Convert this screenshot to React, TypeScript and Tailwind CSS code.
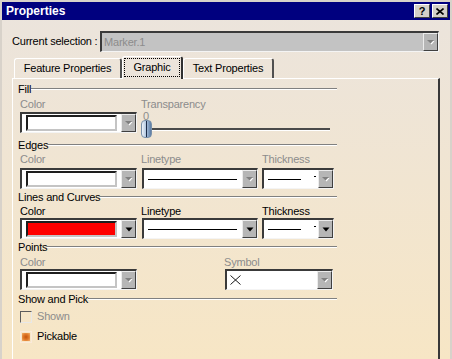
import React from "react";

const OFF = "text-[#8c8c8c]";

function Arrow({ off }: { off?: boolean }) {
  return off ? (
    <svg width="9" height="6" viewBox="0 0 9 6">
      <path d="M2.5 2h6l-3 3.5z" fill="#ffffff" />
      <path d="M1 1h7l-3.5 3.5z" fill="#808080" />
    </svg>
  ) : (
    <svg width="8" height="5" viewBox="0 0 8 5">
      <path d="M0.5 0.5h7L4 4.5z" fill="#000000" />
    </svg>
  );
}

function DropBtn({ off }: { off?: boolean }) {
  return (
    <div className="w-[15px] self-stretch flex items-center justify-center bg-[#b6b6b6] border-t border-l border-t-[#ececec] border-l-[#ececec] border-r border-b border-r-[#404040] border-b-[#404040]">
      <Arrow off={off} />
    </div>
  );
}

function Combo({
  className = "",
  children,
  off,
  bg = "bg-white",
}: {
  className?: string;
  children?: React.ReactNode;
  off?: boolean;
  bg?: string;
}) {
  return (
    <div
      className={`flex h-[21px] border-t-2 border-l-2 border-t-[#3a3a3a] border-l-[#3a3a3a] border-r border-b border-r-[#f4f4f4] border-b-[#f4f4f4] ${bg} ${className}`}
    >
      <div className="flex-1 flex items-center min-w-0">{children}</div>
      <DropBtn off={off} />
    </div>
  );
}

function Swatch({ color = "bg-white" }: { color?: string }) {
  return (
    <div
      className={`ml-[4px] h-[16px] w-[91px] border-t-2 border-l-2 border-t-[#1e1e1e] border-l-[#1e1e1e] border-r-2 border-b-2 border-r-[#c4c4c4] border-b-[#c4c4c4] ${color}`}
    />
  );
}

function Label({ children, off }: { children: React.ReactNode; off?: boolean }) {
  return <div className={`h-[12px] leading-[12px] whitespace-nowrap ${off ? OFF : "text-black"}`}>{children}</div>;
}

function Header({ title, className = "" }: { title: string; className?: string }) {
  return (
    <div className={`flex items-center h-[12px] w-[319px] ${className}`}>
      <span className="leading-[12px] whitespace-nowrap">{title}</span>
      <div className="flex-1 h-[2px] border-t border-t-[#808080] border-b border-b-white" />
    </div>
  );
}

function LineCombo({ w, off }: { w: string; off?: boolean }) {
  return (
    <Combo className={w} off={off}>
      <div className="ml-[4px] h-px w-[89px] bg-black" />
    </Combo>
  );
}

function ThickCombo({ off }: { off?: boolean }) {
  return (
    <Combo className="w-[72px]" off={off}>
      <div className="ml-[4px] h-px w-[33px] bg-black" />
      <div className="ml-[13px] mb-[6px] h-px w-[2px] bg-black" />
    </Combo>
  );
}

function TabBtn({
  label,
  w,
  selected,
}: {
  label: string;
  w: string;
  selected?: boolean;
}) {
  if (selected) {
    return (
      <div
        className={`${w} h-[23px] relative z-10 -mb-px bg-[#ece4db] rounded-t-[3px] border-t border-l border-t-white border-l-white border-r-2 border-r-[#303030] p-[1px] pb-[2px]`}
      >
        <div className="h-full border border-dotted border-black flex items-center justify-center">{label}</div>
      </div>
    );
  }
  return (
    <div
      className={`${w} h-[20px] mt-[2px] rounded-t-[3px] border-t border-l border-t-white border-l-white border-r-2 border-r-[#505050] flex items-center justify-center`}
    >
      {label}
    </div>
  );
}

export default function App() {
  return (
    <div className="w-[452px] h-[359px] overflow-hidden bg-[#d8d2ca] pt-[2px] pl-[2px] pr-[2px] font-['Liberation_Sans',Arial,sans-serif] text-[11px] tracking-[-0.2px] text-black">
      <div className="h-full bg-linear-to-b from-[#ebe4dd] to-[#f7e6c5]">
        {/* title bar */}
        <div className="h-[18px] bg-[#00007f] flex items-center pl-[4px] pr-[2px]">
          <span className="text-white font-bold text-[12px] tracking-normal">Properties</span>
          <div className="ml-auto flex gap-[2px]">
            <div className="w-[16px] h-[14px] bg-[#d4d0c8] border-t border-l border-t-white border-l-white border-r border-b border-r-[#404040] border-b-[#404040] flex items-center justify-center font-bold text-[11px] leading-none">
              ?
            </div>
            <div className="w-[16px] h-[14px] bg-[#d4d0c8] border-t border-l border-t-white border-l-white border-r border-b border-r-[#404040] border-b-[#404040] flex items-center justify-center">
              <svg width="8" height="7" viewBox="0 0 8 7">
                <path d="M0.5 0.5l7 6M7.5 0.5l-7 6" stroke="#000" strokeWidth="1.6" />
              </svg>
            </div>
          </div>
        </div>

        {/* current selection */}
        <div className="flex items-center pl-[10px] mt-[11px]">
          <span className="w-[88px] whitespace-nowrap">Current selection :</span>
          <Combo className="w-[339px] h-[20px]" bg="bg-[#c3c3c3]" off>
            <span className={`ml-[2px] ${OFF}`}>Marker.1</span>
          </Combo>
        </div>

        {/* tabs */}
        <div className="flex items-end pl-[12px] mt-[4px]">
          <TabBtn label="Feature Properties" w="w-[108px]" />
          <TabBtn label="Graphic" w="w-[61px]" selected />
          <TabBtn label="Text Properties" w="w-[91px]" />
        </div>

        {/* tab panel */}
        <div className="ml-[10px] w-[428px] h-[300px] border-t border-l border-t-white border-l-white border-r-2 border-r-[#383838] pl-[5px] pt-[4px]">
          <Header title="Fill" />
          <div className="flex ml-[2px] mt-[3px] h-[40px]">
            <div className="w-[117px]">
              <Label off>Color</Label>
              <Combo className="w-[117px] mt-[2px]" off>
                <Swatch />
              </Combo>
            </div>
            <div className="ml-[4px] w-[190px]">
              <Label off>Transparency</Label>
              <div className="relative h-[28px]">
                <span className={`absolute left-[2px] top-[1px] leading-[11px] ${OFF}`}>0</span>
                <div className="absolute left-[11px] top-[18px] w-[178px] h-[3px] border-t-2 border-t-[#4a4a4a] border-b border-b-white" />
                <div className="absolute left-0 top-[10px] w-[11px] h-[18px] rounded-[4px] border border-[#7890aa] bg-linear-to-r from-[#eef3f9] via-[#a8c0dc] to-[#5c7ca4] flex justify-center">
                  <div className="w-px h-full bg-[#1c2c48]" />
                </div>
              </div>
            </div>
          </div>

          <Header title="Edges" className="mt-[1px]" />
          <div className="flex ml-[2px] mt-[2px]">
            <div className="w-[117px]">
              <Label off>Color</Label>
              <Combo className="w-[117px] mt-[3px]" off>
                <Swatch />
              </Combo>
            </div>
            <div className="ml-[5px] w-[116px]">
              <div className="-ml-px">
                <Label off>Linetype</Label>
              </div>
              <div className="mt-[3px]">
                <LineCombo w="w-[116px]" off />
              </div>
            </div>
            <div className="ml-[4px] w-[72px]">
              <Label off>Thickness</Label>
              <div className="mt-[3px]">
                <ThickCombo off />
              </div>
            </div>
          </div>

          <Header title="Lines and Curves" className="mt-[2px]" />
          <div className="flex ml-[2px] mt-[2px]">
            <div className="w-[117px]">
              <Label>Color</Label>
              <Combo className="w-[117px] mt-[1px]">
                <Swatch color="bg-[#ff0000]" />
              </Combo>
            </div>
            <div className="ml-[5px] w-[116px]">
              <div className="-ml-px">
                <Label>Linetype</Label>
              </div>
              <div className="mt-[1px]">
                <LineCombo w="w-[116px]" />
              </div>
            </div>
            <div className="ml-[4px] w-[72px]">
              <Label>Thickness</Label>
              <div className="mt-[1px]">
                <ThickCombo />
              </div>
            </div>
          </div>

          <Header title="Points" className="mt-[2px]" />
          <div className="flex ml-[2px] mt-[3px]">
            <div className="w-[117px]">
              <Label off>Color</Label>
              <Combo className="w-[117px] mt-[1px]" off>
                <Swatch />
              </Combo>
            </div>
            <div className="ml-[88px] w-[108px]">
              <div className="-ml-px">
                <Label off>Symbol</Label>
              </div>
              <Combo className="w-[108px] mt-[1px]" off>
                <svg className="ml-[3px]" width="11" height="10" viewBox="0 0 11 10">
                  <path d="M0.5 0.5l10 9M10.5 0.5l-10 9" stroke="#000" strokeWidth="0.9" />
                </svg>
              </Combo>
            </div>
          </div>

          <Header title="Show and Pick" className="mt-[3px]" />
          <div className="flex items-center ml-[2px] mt-[5px] h-[13px]">
            <div className="w-[12px] h-[12px] border border-[#5c5c5c] border-r-[#e8e8e8] border-b-[#e8e8e8]" />
            <span className={`ml-[5px] ${OFF}`}>Shown</span>
          </div>
          <div className="flex items-center ml-[2px] mt-[7px] h-[13px]">
            <div className="w-[12px] h-[12px] border border-[#faeadb] p-px">
              <div className="w-full h-full bg-[radial-gradient(circle,#c4520c_0%,#e07a2a_50%,#f4b070_100%)]" />
            </div>
            <span className="ml-[5px]">Pickable</span>
          </div>
        </div>
      </div>
    </div>
  );
}
